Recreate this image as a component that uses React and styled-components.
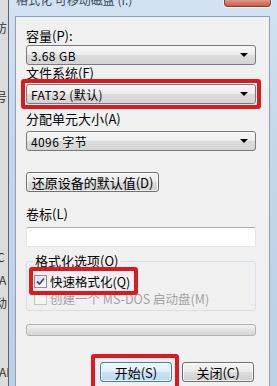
import React from "react";
import styled, { createGlobalStyle } from "styled-components";

const Global = createGlobalStyle`
  html, body {
    margin: 0;
    padding: 0;
    background: #d9d9d9;
    overflow: hidden;
  }
  body {
    font-family: "Noto Sans CJK SC", "Liberation Sans", sans-serif;
    font-size: 13px;
    color: #000;
  }
`;

const Page = styled.div`
  display: flex;
  width: 277px;
  height: 386px;
  overflow: hidden;
`;

const BackStrip = styled.div`
  width: 8px;
  flex: none;
  display: flex;
  flex-direction: column;
  overflow: hidden;
  background: #dcdcdc;
  color: #333;
`;

const Glyph = styled.span`
  display: block;
  height: 13px;
  line-height: 13px;
  font-size: 12px;
  white-space: nowrap;
  margin-top: ${({ $gap }) => $gap}px;
  margin-left: ${({ $shift }) => $shift || 0}px;
`;

const Window = styled.div`
  flex: 1;
  display: flex;
  flex-direction: column;
  border-left: 1px solid #56657a;
  background: linear-gradient(180deg, #d3e2f2 0%, #c3d6ea 40%, #bcd0e6 100%);
`;

const TitleBar = styled.div`
  height: 16px;
  flex: none;
  display: flex;
  align-items: flex-start;
  justify-content: space-between;
  overflow: hidden;
  padding-left: 7px;
`;

const TitleText = styled.span`
  font-size: 12px;
  line-height: 14px;
  margin-top: -7px;
  color: #3a4a5c;
  white-space: nowrap;
`;

const CloseBtn = styled.div`
  width: 45px;
  height: 7px;
  margin-right: 9px;
  margin-top: -1px;
  border: 1px solid #8d3e32;
  border-top: none;
  border-radius: 0 0 4px 4px;
  background: linear-gradient(180deg, #e3a597 0%, #d17766 60%, #c4604e 100%);
  box-shadow: 0 0 0 1px rgba(255, 255, 255, 0.6);
`;

const FrameBody = styled.div`
  flex: 1;
  display: flex;
  padding-left: 6px;
  padding-right: 10px;
`;

const Content = styled.div`
  flex: 1;
  display: flex;
  flex-direction: column;
  align-items: flex-start;
  background: #f0f0f0;
  border: 1px solid #8da2b8;
  border-bottom: none;
  padding-left: 10px;
  padding-right: 8px;
`;

const Label = styled.div`
  height: 14px;
  line-height: 14px;
  font-size: 13px;
  margin-top: ${({ $gap }) => $gap}px;
  white-space: nowrap;
`;

const Combo = styled.div`
  width: 230px;
  height: 20px;
  box-sizing: border-box;
  margin-top: ${({ $gap }) => $gap || 0}px;
  display: flex;
  align-items: center;
  justify-content: space-between;
  padding: 0 7px 0 4px;
  border: 1px solid #7a7a7a;
  border-radius: 3px;
  background: linear-gradient(180deg, #f7f7f7 0%, #ececec 48%, #dcdcdc 52%, #d4d4d4 100%);
  font-size: 12px;
  letter-spacing: 0.4px;
  white-space: nowrap;
`;

const Arrow = styled.span`
  width: 0;
  height: 0;
  border-left: 4px solid transparent;
  border-right: 4px solid transparent;
  border-top: 4px solid #000;
`;

const Highlight = styled.div`
  position: relative;
  z-index: 1;
  box-sizing: border-box;
  border: 4px solid #dc1820;
  border-radius: 3px;
  padding: ${({ $pad }) => $pad};
  margin: ${({ $margin }) => $margin};
`;

const Button = styled.button`
  all: unset;
  box-sizing: border-box;
  height: 20px;
  width: ${({ $width }) => $width}px;
  margin-top: ${({ $gap }) => $gap || 0}px;
  display: flex;
  align-items: center;
  justify-content: center;
  font-family: "Noto Sans CJK SC", "Liberation Sans", sans-serif;
  font-size: 13px;
  border: 1px solid ${({ $primary }) => ($primary ? "#3c7fb1" : "#707070")};
  border-radius: 3px;
  background: ${({ $primary }) =>
    $primary
      ? "linear-gradient(180deg, #eef7fc 0%, #e0eff9 48%, #c8e2f3 52%, #bcdcf0 100%)"
      : "linear-gradient(180deg, #f3f3f3 0%, #ebebeb 48%, #dddddd 52%, #cfcfcf 100%)"};
  box-shadow: inset 0 0 0 1px rgba(255, 255, 255, 0.7);
`;

const TextBox = styled.div`
  width: 230px;
  height: 20px;
  box-sizing: border-box;
  margin-top: 6px;
  background: #fff;
  border: 1px solid #e0e6ec;
  border-top-color: #abadb3;
  border-radius: 2px;
`;

const Group = styled.fieldset`
  width: 230px;
  box-sizing: border-box;
  margin: 7px 0 0;
  padding: 0 0 4px 7px;
  border: 1px solid #d5dfe5;
  border-radius: 3px;
  display: flex;
  flex-direction: column;
  align-items: flex-start;
`;

const Legend = styled.legend`
  padding: 0 2px 0 1px;
  height: 14px;
  line-height: 14px;
  font-size: 13px;
`;

const CheckRow = styled.label`
  display: flex;
  align-items: center;
  gap: 3px;
  height: 16px;
  font-size: 12.5px;
  white-space: nowrap;
  color: ${({ $disabled }) => ($disabled ? "#a3a3a3" : "#000")};
  margin-top: ${({ $gap }) => $gap || 0}px;
`;

const Box = styled.span`
  width: 11px;
  height: 11px;
  flex: none;
  display: flex;
  align-items: center;
  justify-content: center;
  border: 1px solid ${({ $disabled }) => ($disabled ? "#c4c4c4" : "#8f8f8f")};
  background: ${({ $disabled }) =>
    $disabled ? "#f4f4f4" : "linear-gradient(135deg, #dcdcdc 0%, #fcfcfc 100%)"};
`;

const Progress = styled.div`
  width: 230px;
  height: 12px;
  box-sizing: border-box;
  margin-top: 13px;
  border: 1px solid #b2b2b2;
  border-radius: 3px;
  background: linear-gradient(180deg, #f3f3f3 0%, #e2e2e2 50%, #d6d6d6 100%);
`;

const Actions = styled.div`
  width: 230px;
  display: flex;
  justify-content: flex-end;
  align-items: flex-start;
  gap: 3px;
  margin-top: 18px;
  padding-right: 2px;
  box-sizing: border-box;
`;

const CloseButton = styled(Button)`
  margin-top: 8px;
`;

function Check() {
  return (
    <svg width="9" height="9" viewBox="0 0 9 9">
      <path d="M1 4.5 L3.5 7 L8 1.5" fill="none" stroke="#3b4f8f" strokeWidth="1.8" />
    </svg>
  );
}

export default function App() {
  return (
    <Page>
      <Global />
      <BackStrip>
        <Glyph $gap={21} $shift={-5}>访</Glyph>
        <Glyph $gap={56} $shift={-5}>号</Glyph>
        <Glyph $gap={147} $shift={-3}>C</Glyph>
        <Glyph $gap={10} $shift={-1}>A</Glyph>
        <Glyph $gap={10} $shift={-5}>动</Glyph>
        <Glyph $gap={56} $shift={-1}>AI</Glyph>
      </BackStrip>
      <Window>
        <TitleBar>
          <TitleText>格式化 可移动磁盘 (I:)</TitleText>
          <CloseBtn />
        </TitleBar>
        <FrameBody>
          <Content>
            <Label $gap={12}>容量(P):</Label>
            <Combo $gap={2}>
              3.68 GB
              <Arrow />
            </Combo>
            <Label $gap={1}>文件系统(F)</Label>
            <Highlight $pad="1px" $margin="-1px 0 0 -5px">
              <Combo>
                FAT32 (默认)
                <Arrow />
              </Combo>
            </Highlight>
            <Label $gap={3}>分配单元大小(A)</Label>
            <Combo $gap={5}>
              4096 字节
              <Arrow />
            </Combo>
            <Button $width={133} $gap={21}>还原设备的默认值(D)</Button>
            <Label $gap={15}>卷标(L)</Label>
            <TextBox />
            <Group>
              <Legend>格式化选项(O)</Legend>
              <Highlight $pad="2px 4px 2px 1px" $margin="-1px 0 0 -5px">
                <CheckRow>
                  <Box>
                    <Check />
                  </Box>
                  快速格式化(Q)
                </CheckRow>
              </Highlight>
              <CheckRow $disabled $gap={-5}>
                <Box $disabled />
                创建一个 MS-DOS 启动盘(M)
              </CheckRow>
            </Group>
            <Progress />
            <Actions>
              <Highlight $pad="4px 3px 8px 5px">
                <Button $width={72} $primary>
                  开始(S)
                </Button>
              </Highlight>
              <CloseButton $width={72}>关闭(C)</CloseButton>
            </Actions>
          </Content>
        </FrameBody>
      </Window>
    </Page>
  );
}
